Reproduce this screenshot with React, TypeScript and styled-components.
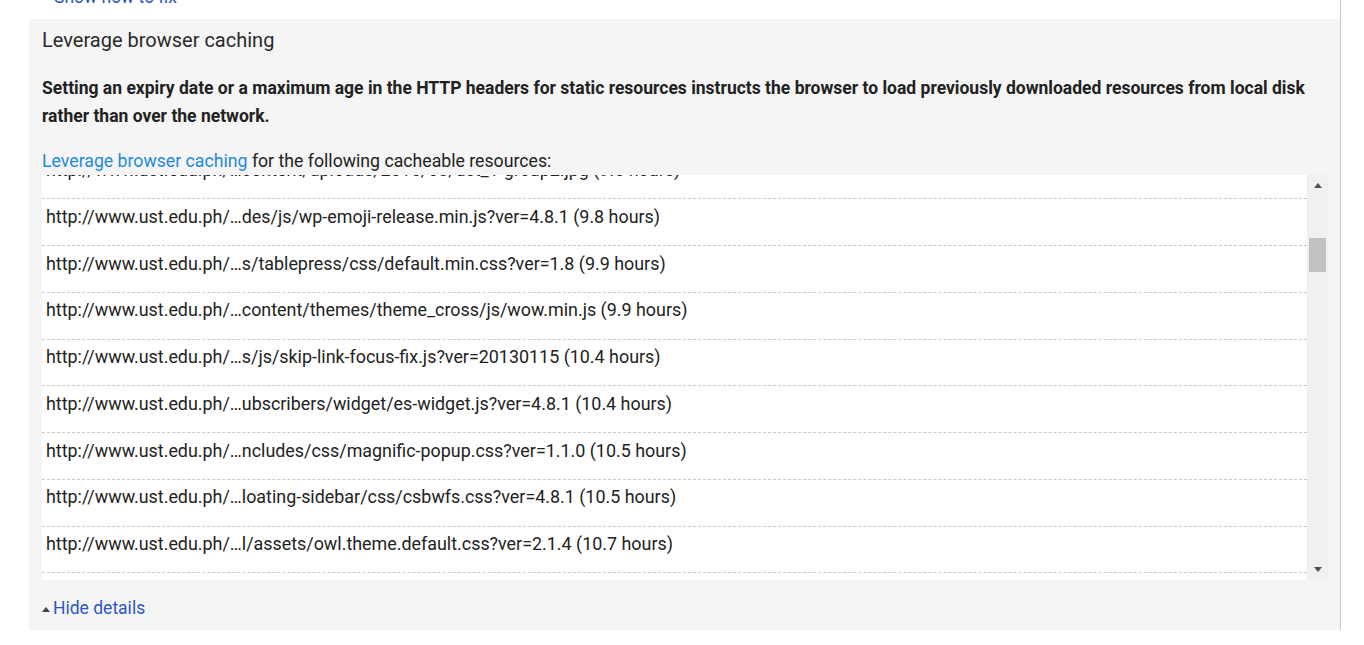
import React from "react";
import styled, { createGlobalStyle } from "styled-components";

const GlobalStyle = createGlobalStyle`
  html, body {
    margin: 0;
    padding: 0;
    background: #fff;
    font-family: Roboto, "Liberation Sans", Arial, sans-serif;
    overflow: hidden;
  }
`;

const resources = [
  "http://www.ust.edu.ph/…content/uploads/2016/08/ust_1-group2.jpg (9.6 hours)",
  "http://www.ust.edu.ph/…des/js/wp-emoji-release.min.js?ver=4.8.1 (9.8 hours)",
  "http://www.ust.edu.ph/…s/tablepress/css/default.min.css?ver=1.8 (9.9 hours)",
  "http://www.ust.edu.ph/…content/themes/theme_cross/js/wow.min.js (9.9 hours)",
  "http://www.ust.edu.ph/…s/js/skip-link-focus-fix.js?ver=20130115 (10.4 hours)",
  "http://www.ust.edu.ph/…ubscribers/widget/es-widget.js?ver=4.8.1 (10.4 hours)",
  "http://www.ust.edu.ph/…ncludes/css/magnific-popup.css?ver=1.1.0 (10.5 hours)",
  "http://www.ust.edu.ph/…loating-sidebar/css/csbwfs.css?ver=4.8.1 (10.5 hours)",
  "http://www.ust.edu.ph/…l/assets/owl.theme.default.css?ver=2.1.4 (10.7 hours)",
  "http://www.ust.edu.ph/…plugins/js/jquery.easing.min.js?ver=1.3 (10.8 hours)",
];

const App: React.FC = () => {
  return (
    <>
      <GlobalStyle />
      <Page>
        <TopLink>
          <LinkText>Show how to fix</LinkText>
        </TopLink>
        <Panel>
          <RuleTitle>Leverage browser caching</RuleTitle>
          <Summary>
            Setting an expiry date or a maximum age in the HTTP headers for static resources instructs the
            browser to load previously downloaded resources from local disk rather than over the network.
          </Summary>
          <Intro>
            <InfoLink>Leverage browser caching</InfoLink> for the following cacheable resources:
          </Intro>
          <ScrollBox>
            <Viewport>
              <List>
                {resources.map((url) => (
                  <Row key={url}>{url}</Row>
                ))}
              </List>
            </Viewport>
            <Scrollbar>
              <ScrollButton>
                <Arrow $dir="up" />
              </ScrollButton>
              <Track>
                <Thumb style={{ marginTop: 42 }} />
              </Track>
              <ScrollButton>
                <Arrow $dir="down" />
              </ScrollButton>
            </Scrollbar>
          </ScrollBox>
          <Toggle>
            <Caret />
            <LinkText>Hide details</LinkText>
          </Toggle>
        </Panel>
      </Page>
    </>
  );
};

export default App;

const Page = styled.div`
  width: 1341px;
  height: 645px;
  box-sizing: border-box;
  padding-left: 29px;
  border-right: 1px solid #c8c8c8;
`;

const TopLink = styled.div`
  height: 24px;
  margin-top: -15px;
  margin-bottom: 10px;
  padding-left: 25px;
  font-size: 17.5px;
  line-height: 24px;
`;

const LinkText = styled.span`
  color: #2c55c9;
  cursor: pointer;
`;

const Caret = styled.span`
  width: 0;
  height: 0;
  margin-top: 3px;
  border-left: 4px solid transparent;
  border-right: 4px solid transparent;
  border-bottom: 5px solid #444;
`;

const Panel = styled.div`
  width: 1311px;
  box-sizing: border-box;
  background: #f5f5f5;
  padding: 7px 12px 16.5px 13px;
`;

const RuleTitle = styled.h3`
  margin: 0;
  font-size: 20px;
  line-height: 28px;
  font-weight: 400;
  color: #2a2a2a;
`;

const Summary = styled.p`
  margin: 20px 0 0;
  font-size: 17.5px;
  line-height: 28px;
  font-weight: 700;
  color: #212121;
`;

const Intro = styled.p`
  margin: 18.5px 0 0;
  font-size: 17.7px;
  line-height: 24px;
  color: #222;
`;

const InfoLink = styled.span`
  color: #1e8ae0;
  cursor: pointer;
`;

const ScrollBox = styled.div`
  display: flex;
  height: 405px;
  margin-top: 2.5px;
  background: #fff;
`;

const Viewport = styled.div`
  flex: 1;
  overflow: hidden;
`;

const List = styled.ul`
  list-style: none;
  margin: -22.5px 0 0;
  padding: 0;
`;

const Row = styled.li`
  box-sizing: border-box;
  height: 46.75px;
  padding: 5.5px 4px 0;
  font-size: 17.9px;
  line-height: 24px;
  color: #222;
  white-space: nowrap;
  border-bottom: 1px dashed #c8c8c8;
`;

const Scrollbar = styled.div`
  width: 21px;
  display: flex;
  flex-direction: column;
  background: #f0f0f0;
`;

const ScrollButton = styled.div`
  height: 21px;
  display: flex;
  align-items: center;
  justify-content: center;
`;

const Arrow = styled.span<{ $dir: "up" | "down" }>`
  width: 0;
  height: 0;
  border-left: 4.5px solid transparent;
  border-right: 4.5px solid transparent;
  ${(p) =>
    p.$dir === "up"
      ? "border-bottom: 5px solid #505050;"
      : "border-top: 5px solid #505050;"}
`;

const Track = styled.div`
  flex: 1;
  display: flex;
  flex-direction: column;
  align-items: center;
`;

const Thumb = styled.div`
  width: 17px;
  height: 34px;
  background: #c1c1c1;
`;

const Toggle = styled.div`
  display: flex;
  align-items: center;
  gap: 3px;
  margin-top: 16px;
  font-size: 17.5px;
  line-height: 24px;
`;
